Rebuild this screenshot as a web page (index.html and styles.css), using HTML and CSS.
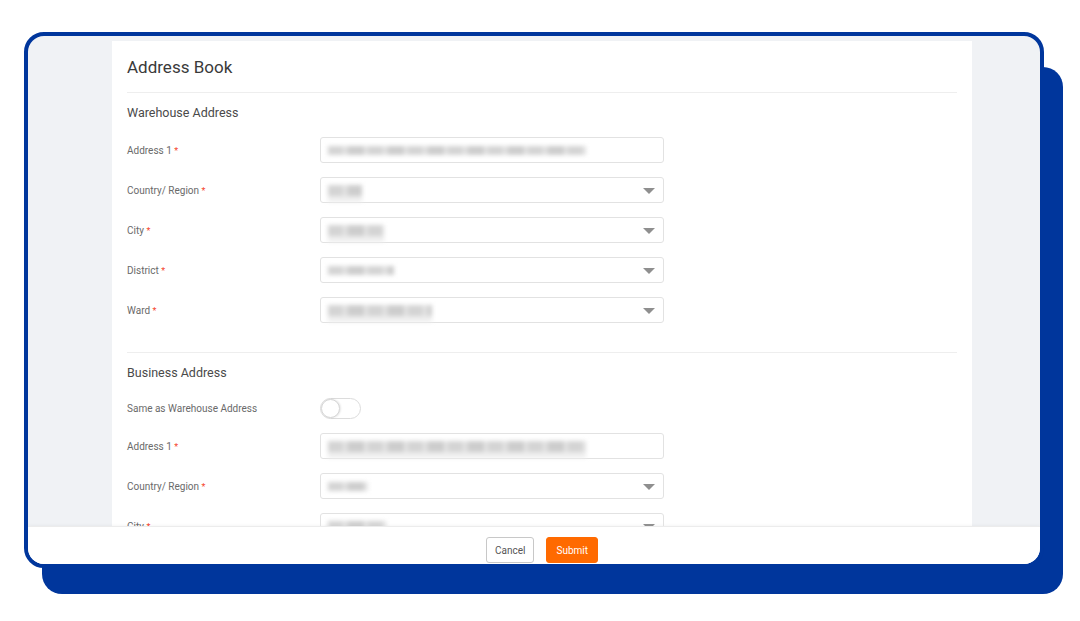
FILE: index.html
```html
<!DOCTYPE html>
<html lang="en">
<head>
    <meta charset="UTF-8">
    <meta name="viewport" content="width=device-width, initial-scale=1.0">
    <title>Address Book</title>
    <link rel="stylesheet" href="styles.css">
</head>
<body>
    <div class="stage">
        <div class="frame">
            <div class="slab"></div>
            <div class="screen">
                <div class="scroll">
                    <div class="card">
                        <h1 class="card-title">Address Book</h1>

                        <div class="section">
                            <h3 class="section-title">Warehouse Address</h3>
                            <div class="row">
                                <label class="label">Address 1 <span class="req">*</span></label>
                                <div class="field">
                                    <span class="blur" style="width: 258px"></span>
                                </div>
                            </div>
                            <div class="row">
                                <label class="label">Country/ Region <span class="req">*</span></label>
                                <div class="field select">
                                    <span class="blur tall" style="width: 34px"></span>
                                    <span class="caret"></span>
                                </div>
                            </div>
                            <div class="row">
                                <label class="label">City <span class="req">*</span></label>
                                <div class="field select">
                                    <span class="blur tall" style="width: 56px"></span>
                                    <span class="caret"></span>
                                </div>
                            </div>
                            <div class="row">
                                <label class="label">District <span class="req">*</span></label>
                                <div class="field select">
                                    <span class="blur" style="width: 66px"></span>
                                    <span class="caret"></span>
                                </div>
                            </div>
                            <div class="row">
                                <label class="label">Ward <span class="req">*</span></label>
                                <div class="field select">
                                    <span class="blur tall" style="width: 104px"></span>
                                    <span class="caret"></span>
                                </div>
                            </div>
                        </div>

                        <div class="section">
                            <h3 class="section-title">Business Address</h3>
                            <div class="row short">
                                <label class="label">Same as Warehouse Address</label>
                                <span class="toggle"><span class="knob"></span></span>
                            </div>
                            <div class="row">
                                <label class="label">Address 1 <span class="req">*</span></label>
                                <div class="field">
                                    <span class="blur tall" style="width: 258px"></span>
                                </div>
                            </div>
                            <div class="row">
                                <label class="label">Country/ Region <span class="req">*</span></label>
                                <div class="field select">
                                    <span class="blur" style="width: 40px"></span>
                                    <span class="caret"></span>
                                </div>
                            </div>
                            <div class="row">
                                <label class="label">City <span class="req">*</span></label>
                                <div class="field select">
                                    <span class="blur tall" style="width: 58px"></span>
                                    <span class="caret"></span>
                                </div>
                            </div>
                        </div>
                    </div>
                </div>
                <div class="footer">
                    <div class="footer-inner">
                        <button class="btn">Cancel</button>
                        <button class="btn primary">Submit</button>
                    </div>
                </div>
            </div>
        </div>
    </div>
</body>
</html>
```

FILE: styles.css
```css
body {
    margin: 0;
    background: #fff;
    font-family: Roboto, "Liberation Sans", Arial, sans-serif;
}
.stage {
    padding: 32px 0 0 24px;
    height: 600px;
}
.frame {
    position: relative;
    width: 1020px;
    height: 536px;
}
/* the blue slab behind the window */
.slab {
    position: absolute;
    left: 18px;
    top: 35px;
    width: 1021px;
    height: 527px;
    background: #00369c;
    border-radius: 20px;
}
.screen {
    position: relative;
    box-sizing: border-box;
    height: 100%;
    border: 4px solid #00369c;
    border-radius: 20px;
    background: #f0f2f5;
    overflow: hidden;
    display: flex;
    flex-direction: column;
}
.scroll {
    flex: 1;
    overflow: hidden;
    padding: 5px 0 0 84px;
}
.card {
    width: 860px;
    box-sizing: border-box;
    background: #fff;
    padding: 0 15px;
    height: 100%;
}
.card-title {
    margin: 0;
    height: 51px;
    line-height: 53px;
    font-size: 17px;
    font-weight: 400;
    color: #3a3a3a;
    border-bottom: 1px solid #eee;
}
.section {
    padding-bottom: 15px;
    border-bottom: 1px solid #eee;
}
.section-title {
    margin: 12px 0 16px;
    font-size: 12.5px;
    line-height: 16px;
    font-weight: 400;
    color: #4a4a4a;
}
.row {
    display: flex;
    align-items: center;
    height: 26px;
    margin-bottom: 14px;
}
.row.short {
    height: 22px;
}
.label {
    width: 193px;
    font-size: 10px;
    color: #6a6a6a;
}
.req {
    color: #f5452d;
    font-size: 9px;
}
.field {
    position: relative;
    box-sizing: border-box;
    width: 344px;
    height: 26px;
    border: 1px solid #e2e2e2;
    border-radius: 3px;
    display: flex;
    align-items: center;
    padding-left: 7px;
}
.blur {
    display: block;
    height: 9px;
    background: repeating-linear-gradient(90deg, #d4d4d4 0 14px, #e0e0e0 14px 20px, #cdcdcd 20px 36px, #e4e4e4 36px 40px);
    filter: blur(2px);
}
.blur.tall {
    height: 11px;
    box-shadow: 0 6px 0 #eeeeee;
}
.caret {
    position: absolute;
    right: 8px;
    top: 10px;
    width: 0;
    height: 0;
    border-left: 6px solid transparent;
    border-right: 6px solid transparent;
    border-top: 6px solid #8f8f8f;
}
.toggle {
    position: relative;
    box-sizing: border-box;
    width: 41px;
    height: 21px;
    border: 1px solid #dcdcdc;
    border-radius: 11px;
    background: #fff;
}
.knob {
    position: absolute;
    left: 0;
    top: 0;
    box-sizing: border-box;
    width: 19px;
    height: 19px;
    border-radius: 50%;
    background: #fff;
    border: 1px solid #d6d6d6;
    box-shadow: 1px 0 2px rgba(0, 0, 0, 0.1);
}
.footer {
    height: 37px;
    background: #fff;
    border-top: 1px solid #ececec;
    box-shadow: 0 -1px 3px rgba(0, 0, 0, 0.04);
}
.footer-inner {
    width: 860px;
    margin-left: 84px;
    display: flex;
    justify-content: center;
    gap: 12px;
    padding-top: 10px;
}
.btn {
    height: 26px;
    padding: 0 8px;
    font-family: inherit;
    font-size: 10px;
    color: #555;
    background: #fff;
    border: 1px solid #c8c8c8;
    border-radius: 3px;
}
.btn.primary {
    color: #fff;
    background: #ff6a00;
    border-color: #ff6a00;
    padding: 0 9px;
}
```
